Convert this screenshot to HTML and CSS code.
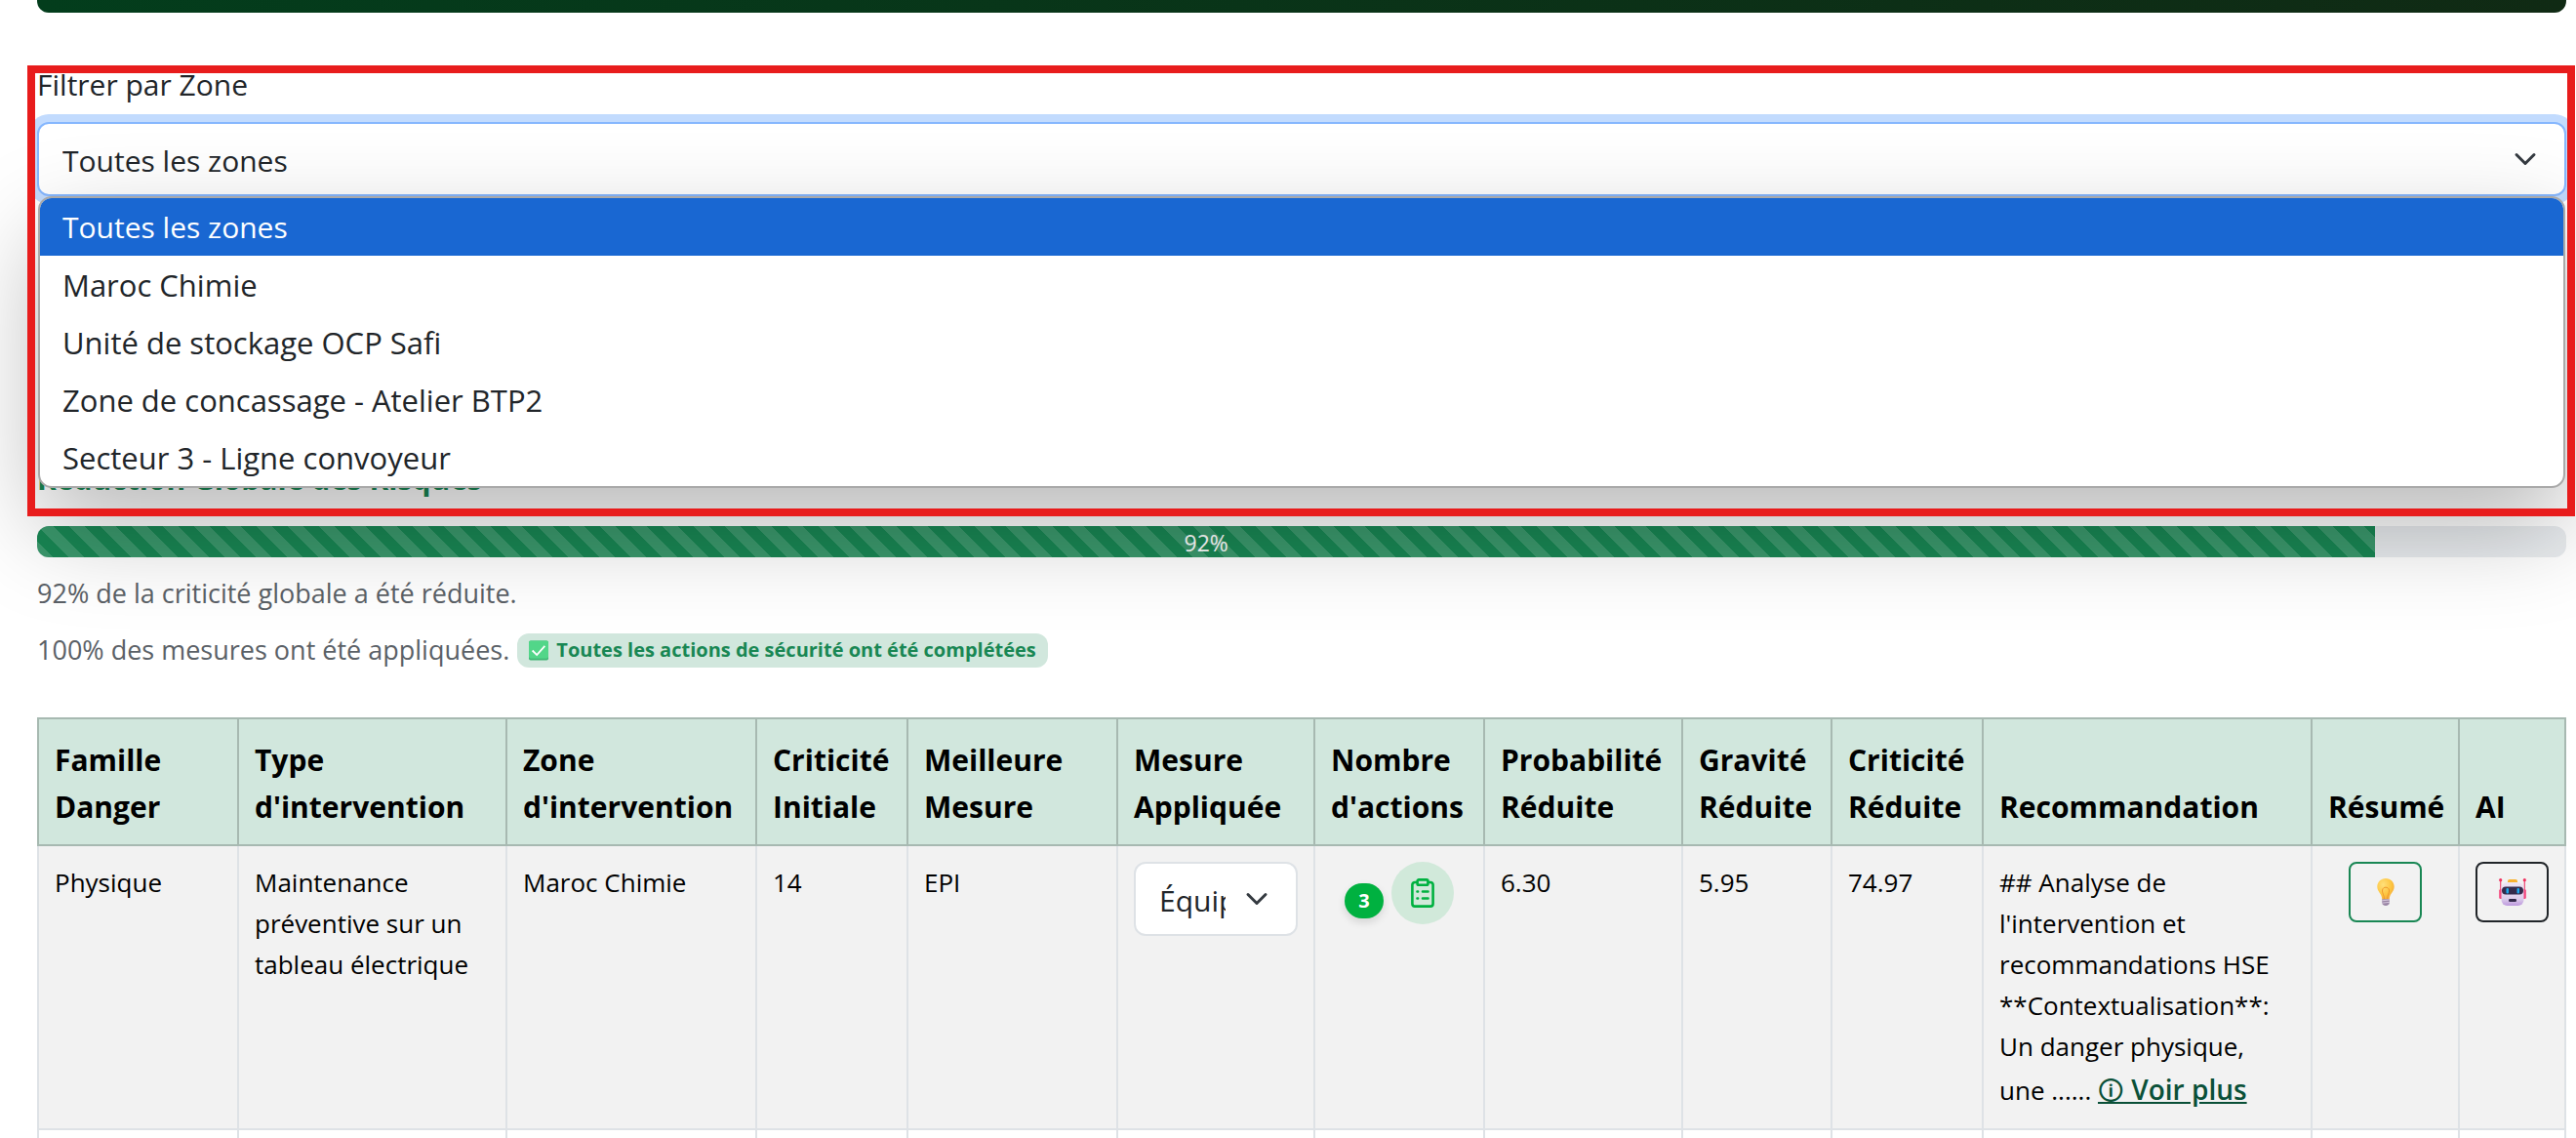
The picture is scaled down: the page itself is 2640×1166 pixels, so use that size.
FILE: index.html
```html
<!DOCTYPE html>
<html lang="fr">
<head>
<meta charset="utf-8">
<title>Analyse des risques</title>
<link rel="stylesheet" href="styles.css">
</head>
<body>
<main class="page">
  <header class="banner"></header>

  <section class="zone-filter">
    <label class="filter-label" for="zone">Filtrer par Zone</label>
    <div class="select-wrap">
      <select class="select select-focus" id="zone">
        <option selected>Toutes les zones</option>
        <option>Maroc Chimie</option>
        <option>Unité de stockage OCP Safi</option>
        <option>Zone de concassage - Atelier BTP2</option>
        <option>Secteur 3 - Ligne convoyeur</option>
      </select>
      <svg class="chevron" viewBox="0 0 16 16" aria-hidden="true"><path d="m2 5 6 6 6-6"/></svg>
      <ul class="options" role="listbox" aria-label="Zones">
        <li class="option option-active" role="option" aria-selected="true">Toutes les zones</li>
        <li class="option" role="option">Maroc Chimie</li>
        <li class="option" role="option">Unité de stockage OCP Safi</li>
        <li class="option" role="option">Zone de concassage - Atelier BTP2</li>
        <li class="option" role="option">Secteur 3 - Ligne convoyeur</li>
      </ul>
    </div>
    <div class="highlight" aria-hidden="true"></div>
  </section>

  <section class="summary">
    <h2 class="summary-title">Réduction Globale des Risques</h2>
    <div class="progress" role="progressbar" aria-valuenow="92" aria-valuemin="0" aria-valuemax="100">
      <div class="progress-bar" style="width: 92.45%">92%</div>
    </div>
    <p class="note">92% de la criticité globale a été réduite.</p>
    <p class="note note-row">100% des mesures ont été appliquées.
      <span class="badge">
        <svg class="check" viewBox="0 0 22 22" aria-hidden="true"><rect width="22" height="22" rx="2" fill="#3fb573"/><rect width="22" height="20" rx="2" fill="#52d689"/><path d="m4 11 5 5 9-10" fill="none" stroke="#fff" stroke-width="2"/></svg>
        Toutes les actions de sécurité ont été complétées
      </span>
    </p>
  </section>

  <table class="risks">
    <colgroup>
      <col class="c-family"><col class="c-type"><col class="c-zone"><col class="c-score"><col class="c-best"><col class="c-applied"><col class="c-count"><col class="c-prob"><col class="c-grav"><col class="c-crit"><col class="c-reco"><col class="c-sum"><col class="c-ai">
    </colgroup>
    <thead>
      <tr>
        <th scope="col">Famille<br>Danger</th>
        <th scope="col">Type<br>d'intervention</th>
        <th scope="col">Zone<br>d'intervention</th>
        <th scope="col">Criticité<br>Initiale</th>
        <th scope="col">Meilleure<br>Mesure</th>
        <th scope="col">Mesure<br>Appliquée</th>
        <th scope="col">Nombre<br>d'actions</th>
        <th scope="col">Probabilité<br>Réduite</th>
        <th scope="col">Gravité<br>Réduite</th>
        <th scope="col">Criticité<br>Réduite</th>
        <th scope="col">Recommandation</th>
        <th scope="col">Résumé</th>
        <th scope="col">AI</th>
      </tr>
    </thead>
    <tbody>
      <tr class="striped">
        <td>Physique</td>
        <td>Maintenance préventive sur un tableau électrique</td>
        <td>Maroc Chimie</td>
        <td>14</td>
        <td>EPI</td>
        <td>
          <div class="select-wrap">
            <select class="select select-cell" aria-label="Mesure appliquée"><option>Équipement</option></select>
            <svg class="chevron" viewBox="0 0 16 16" aria-hidden="true"><path d="m2 5 6 6 6-6"/></svg>
          </div>
        </td>
        <td>
          <div class="actions">
            <span class="count">3</span>
            <button class="round" type="button" aria-label="Voir les actions">
              <svg class="clip" viewBox="0 0 24 30" aria-hidden="true"><path d="M7 4H4a2.600 2.600 0 0 0-2.600 2.600V26A2.600 2.600 0 0 0 4 28.600h16a2.600 2.600 0 0 0 2.600-2.600V6.600A2.600 2.600 0 0 0 20 4h-3"/><rect x="6.600" y="1.400" width="10.800" height="5.400" rx="1.400"/><path d="M6.500 13.500h.6M12 13.500h5.500M6.500 20.500h.6M12 20.500h5.500" stroke-linecap="round"/></svg>
            </button>
          </div>
        </td>
        <td>6.30</td>
        <td>5.95</td>
        <td>74.97</td>
        <td>## Analyse de l'intervention et recommandations HSE **Contextualisation**: Un danger physique, une ...... <a class="more" href="#plus"><span class="info">🛈</span> Voir plus</a></td>
        <td class="center">
          <button class="btn btn-green" type="button" aria-label="Résumé">
            <svg class="emoji" viewBox="0 0 28 28" aria-hidden="true">
              <defs><radialGradient id="glow" cx=".35" cy=".3" r=".8"><stop offset="0" stop-color="#ffe07a"/><stop offset=".6" stop-color="#fdc540"/><stop offset="1" stop-color="#f3a63a"/></radialGradient></defs>
              <path d="M14 0c5 0 8.700 3.700 8.700 8.500 0 5.500-4.700 6.500-5 13h-7.400c-.3-6.500-5-7.500-5-13C5.300 3.700 9 0 14 0z" fill="url(#glow)"/>
              <path d="M12.500 21c0-4-2.500-6-2-9 .4-2 2-2.800 3.500-2.800s3.100.8 3.500 2.800c.5 3-2 5-2 9" fill="none" stroke="#f0982c" stroke-width="1"/>
              <path d="M10.200 21.300h7.600v3.800c0 1.600-1.600 2.900-3.800 2.900s-3.800-1.300-3.800-2.900z" fill="#9a86a5"/>
              <path d="m10.200 22.800 7.600-.8M10.200 25.200l7.600-.8" stroke="#d8cadf" stroke-width="1"/>
            </svg>
          </button>
        </td>
        <td>
          <button class="btn btn-dark" type="button" aria-label="AI">
            <svg class="emoji" viewBox="0 0 28 28" aria-hidden="true">
              <defs><linearGradient id="face" x2="0" y2="1"><stop offset="0" stop-color="#efe4f4"/><stop offset=".7" stop-color="#ddceeb"/><stop offset="1" stop-color="#bd98de"/></linearGradient></defs>
              <path d="M1.700 2v16M26.300 2v16" stroke="#ee4573" stroke-width="1.200"/>
              <circle cx="1.700" cy="1.700" r="1.600" fill="#f0315f"/><circle cx="26.300" cy="1.700" r="1.600" fill="#f0315f"/>
              <rect x=".2" y="11" width="4" height="10" rx="1.500" fill="#f4457c"/><rect x="23.800" y="11" width="4" height="10" rx="1.500" fill="#f4457c"/>
              <rect x="9" y="1" width="10" height="5" rx="2" fill="#f8b230"/>
              <rect x="2.500" y="4" width="23" height="24" rx="6" fill="url(#face)"/>
              <rect x="3" y="8.500" width="22" height="8" rx="4" fill="#342b4c"/>
              <rect x="7.500" y="10" width="2.500" height="5.500" rx="1" fill="#1ca8ee"/><rect x="18.500" y="10" width="2.500" height="5.500" rx="1" fill="#1ca8ee"/>
              <rect x="10" y="21" width="8" height="3" rx="1.200" fill="#342b4c"/>
            </svg>
          </button>
        </td>
      </tr>
      <tr class="next">
        <td></td><td></td><td></td><td></td><td></td><td></td><td></td><td></td><td></td><td></td><td></td><td></td><td></td>
      </tr>
    </tbody>
  </table>
</main>
</body>
</html>
```
FILE: styles.css
```css
* { box-sizing: border-box; }
body {
  margin: 0;
  overflow: hidden;
  background: #fff;
  color: #212529;
  font: 30px/48px "Open Sans", "Noto Sans", sans-serif;
}
.page { padding: 0 10px 0 38px; }
.banner {
  height: 13px;
  border-radius: 0 0 12px 12px;
  background: linear-gradient(90deg, #033d1c, #102a14);
}

/* Zone filter */
.zone-filter { position: relative; margin-top: 48px; padding-top: 2px; }
.filter-label { display: block; margin-bottom: 14px; }
.select-wrap { position: relative; }
.select {
  display: block;
  width: 100%;
  height: 76px;
  margin: 0;
  padding: 3px 72px 0 24px;
  border: 2px solid #dee2e6;
  border-radius: 12px;
  background: #fff;
  color: #212529;
  font: inherit;
  appearance: none;
}
.select-focus { border-color: #86b7fe; box-shadow: 0 0 0 8px #c2dbfe; }
.chevron {
  position: absolute;
  top: 26px;
  right: 30px;
  width: 24px;
  height: 24px;
  fill: none;
  stroke: #343a40;
  stroke-width: 2;
  stroke-linecap: round;
  stroke-linejoin: round;
}
.options {
  position: absolute;
  z-index: 2;
  top: 100%;
  left: 1px;
  right: 1px;
  margin: 0;
  padding: 0;
  overflow: hidden;
  list-style: none;
  background: #fff;
  border: 2px solid #a9a9a9;
  border-radius: 14px;
  box-shadow: 0 40px 100px rgba(0, 0, 0, .28);
}
.option { padding: 6px 23px 5px; font-size: 31px; }
.option-active { background: #1967d2; color: #fff; font-size: 30px; }
.highlight {
  position: absolute;
  z-index: 3;
  top: 6px;
  left: -10px;
  right: -9px;
  height: 462px;
  border: 8px solid #e81c1c;
}

/* Summary */
.summary { padding-top: 266px; }
.summary-title { margin: 0 0 24px; color: #198754; font-size: 30px; line-height: 48px; font-weight: 700; }
.progress { height: 32px; overflow: hidden; border-radius: 12px; background: #e9ecef; }
.progress-bar {
  height: 100%;
  color: #fff;
  font-size: 23px;
  line-height: 34px;
  text-align: center;
  background: #198754 linear-gradient(45deg, rgba(255,255,255,.15) 25%, transparent 25%, transparent 50%, rgba(255,255,255,.15) 50%, rgba(255,255,255,.15) 75%, transparent 75%) 0 0 / 32px 32px;
}
.note { margin: 16px 0 0; color: #5b6167; font-size: 27px; line-height: 42px; }
.note-row { display: flex; align-items: center; gap: 8px; }
.badge {
  display: flex;
  align-items: center;
  gap: 8px;
  height: 35px;
  padding: 0 12px;
  border-radius: 12px;
  background: #d1e7dd;
  color: #198754;
  font-size: 20px;
  font-weight: 700;
}
.check { width: 20px; height: 21px; }

/* Table */
.risks {
  width: 100%;
  margin-top: 48px;
  border-collapse: collapse;
  table-layout: fixed;
  color: #000;
}
.c-family { width: 205px; }
.c-type { width: 275px; }
.c-zone { width: 256px; }
.c-score { width: 155px; }
.c-best { width: 215px; }
.c-applied { width: 202px; }
.c-count { width: 174px; }
.c-prob { width: 203px; }
.c-grav { width: 153px; }
.c-crit { width: 155px; }
.c-reco { width: 337px; }
.c-sum { width: 151px; }
.c-ai { width: 109px; }
.risks th, .risks td { padding: 16px; text-align: left; border: 2px solid #dee2e6; }
.risks th {
  padding: 18px 16px 14px;
  font-size: 30px;
  line-height: 48px;
  font-weight: 700;
  vertical-align: bottom;
  background: #d1e7dd;
  border-color: #a7b9b1;
}
.risks td { font-size: 26px; line-height: 42px; vertical-align: top; }
.risks .center { text-align: center; }
.striped td { background: #f2f2f2; }
.next td { height: 60px; }
.select-cell { font-size: 30px; }
.actions { display: flex; align-items: center; justify-content: center; gap: 8px; }
.count {
  width: 40px;
  height: 36px;
  margin-top: 16px;
  border-radius: 18px;
  background: #00b140;
  box-shadow: 0 4px 8px rgba(0, 0, 0, .12);
  color: #fff;
  font-size: 20px;
  line-height: 36px;
  font-weight: 700;
  text-align: center;
}
.round {
  display: flex;
  align-items: center;
  justify-content: center;
  width: 64px;
  height: 64px;
  padding: 0;
  border: 0;
  border-radius: 50%;
  background: #d1e9da;
}
.clip { width: 24px; height: 30px; fill: none; stroke: #00b140; stroke-width: 2.6; }
.more { display: inline-block; color: #0a5038; font-size: 28px; font-weight: 600; line-height: 46px; }
.info { font-size: 26px; font-weight: 400; }
.btn {
  display: inline-flex;
  align-items: center;
  justify-content: center;
  width: 75px;
  height: 62px;
  padding: 0;
  border: 2px solid;
  border-radius: 8px;
  background: none;
  vertical-align: top;
}
.btn-green { border-color: #198754; }
.btn-dark { border-color: #212529; }
.emoji { width: 28px; height: 28px; }
```
